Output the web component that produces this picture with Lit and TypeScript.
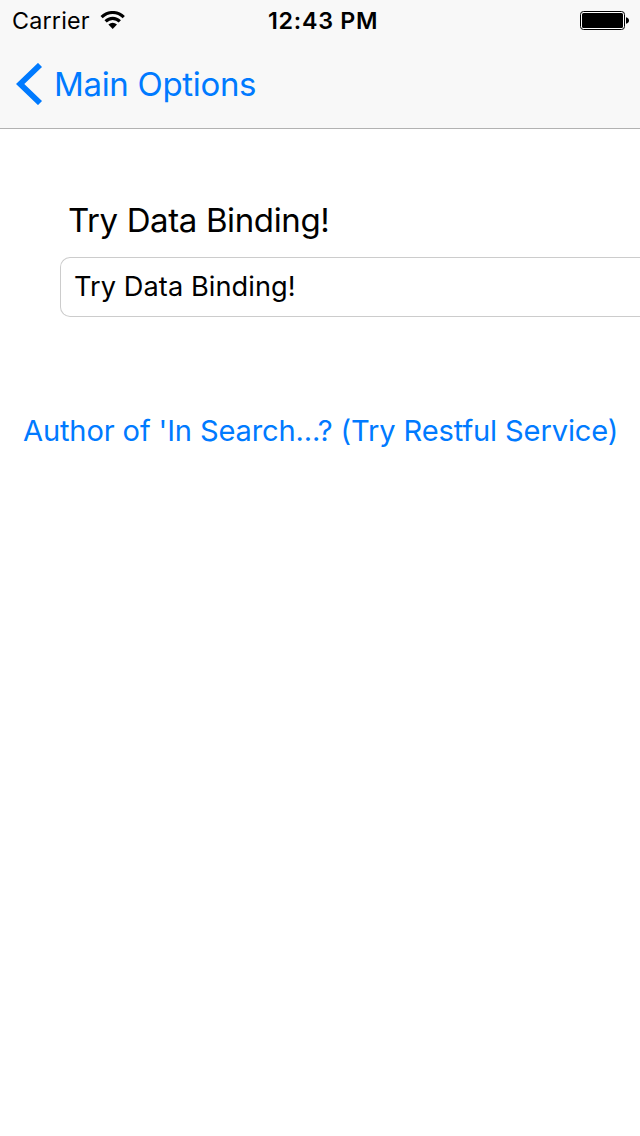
import { LitElement, html, css } from "lit";
import { customElement } from "lit/decorators.js";

@customElement("app-root")
export class AppRoot extends LitElement {
  static styles = css`
    :host {
      display: block;
      width: 640px;
      height: 1136px;
      overflow: hidden;
      background: #fff;
      color: #000;
      font-family: Inter, "Liberation Sans", sans-serif;
      white-space: nowrap;
    }
    .header {
      box-sizing: border-box;
      height: 129px;
      background: #f8f8f8;
      border-bottom: 1px solid #b2b2b2;
    }
    .status {
      display: grid;
      grid-template-columns: 268px 312px 60px;
      height: 40px;
      line-height: 41px;
      font-size: 23.3px;
    }
    .carrier {
      display: flex;
      padding-left: 12px;
      letter-spacing: 0.2px;
    }
    .carrier-name {
      width: 88px;
    }
    .wifi {
      margin-top: 11px;
    }
    .time {
      font-weight: 600;
      letter-spacing: 0.72px;
    }
    .battery {
      margin-top: 11px;
    }
    .back {
      display: flex;
      height: 88px;
      padding-left: 16px;
      color: #007aff;
      font-size: 33px;
      line-height: 88px;
      letter-spacing: -0.32px;
    }
    .chevron {
      margin: 23px 11px 0 0;
    }
    .content {
      display: flex;
      flex-direction: column;
      padding: 71px 0 0 60px;
    }
    .title {
      height: 40px;
      padding-left: 8px;
      font-size: 33px;
      line-height: 40px;
      letter-spacing: -0.38px;
    }
    .field {
      box-sizing: border-box;
      height: 60px;
      margin-top: 17px;
      padding-left: 13px;
      border: 1px solid #ccc;
      border-right: 0;
      border-radius: 10px 0 0 10px;
      font-size: 27.2px;
      line-height: 58px;
      letter-spacing: 0.06px;
    }
    .link {
      margin: 94px 0 0 -37px;
      height: 40px;
      color: #007aff;
      font-size: 29.1px;
      line-height: 40px;
      letter-spacing: -0.14px;
    }
    svg {
      display: block;
      flex: none;
    }
  `;

  render() {
    return html`
      <div class="header">
        <div class="status">
          <div class="carrier">
            <span class="carrier-name">Carrier</span>
            <svg class="wifi" width="26" height="19" viewBox="0 0 26 19">
              <g fill="none" stroke="#000" stroke-width="3.1">
                <path d="M1.6 6.2C8 -.1 17.4 -.1 23.8 6.2" />
                <path d="M5.6 10.4C9.6 6.3 15.8 6.3 19.8 10.4" />
              </g>
              <path d="M8.4 13.6Q12.7 10.1 17 13.6L12.7 18Z" />
            </svg>
          </div>
          <div class="time"><span class="time-text">12:43 PM</span></div>
          <svg class="battery" width="50" height="19" viewBox="0 0 50 19">
            <rect x=".5" y=".5" width="44" height="18" rx="3" fill="#fff" stroke="#000" />
            <rect x="2" y="2" width="41" height="15" rx="1.5" />
            <path d="M46 6.2Q49 7 49 9.5T46 12.8Z" />
          </svg>
        </div>
        <div class="back">
          <svg class="chevron" width="27" height="42" viewBox="0 0 27 42">
            <path d="M24 2L4.2 21L24 40" fill="none" stroke="#007aff" stroke-width="5.8" />
          </svg>
          <span class="back-text">Main Options</span>
        </div>
      </div>
      <div class="content">
        <div class="title"><span>Try Data Binding!</span></div>
        <div class="field"><span>Try Data Binding!</span></div>
        <div class="link"><span>Author of 'In Search...? (Try Restful Service)</span></div>
      </div>
    `;
  }
}
